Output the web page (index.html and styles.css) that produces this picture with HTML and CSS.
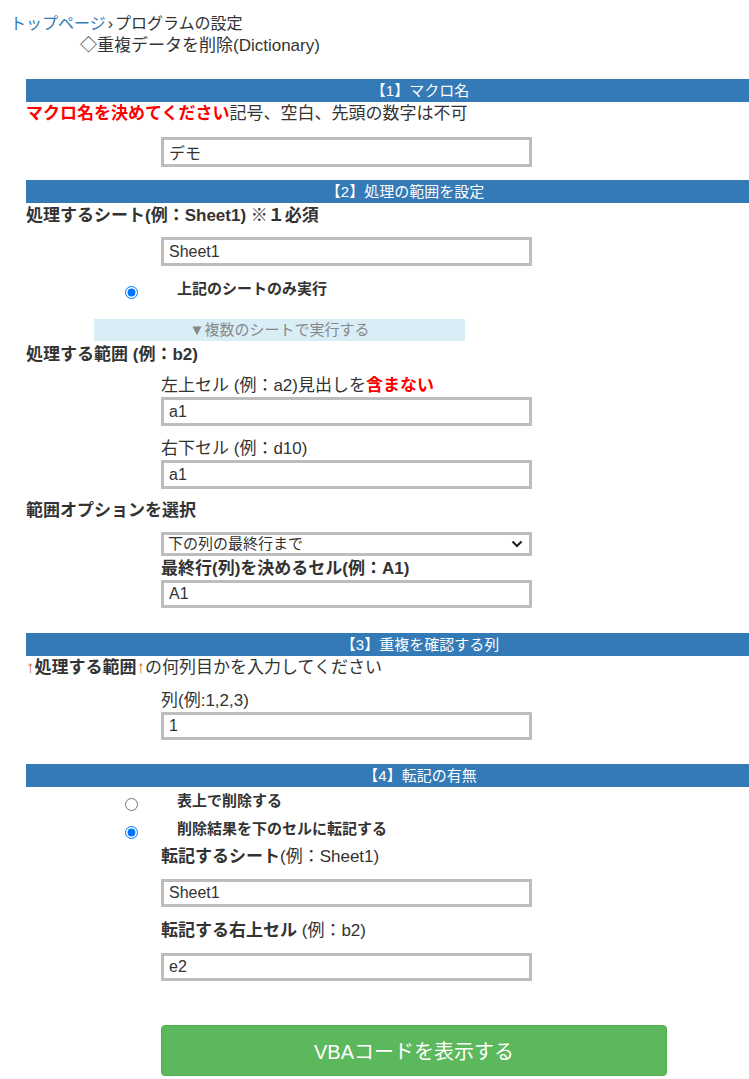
FILE: index.html
```html
<!DOCTYPE html>
<html lang="ja">
<head>
<meta charset="utf-8">
<title>重複データを削除(Dictionary)</title>
<link rel="stylesheet" href="styles.css">
</head>
<body>
<div class="crumb"><a class="crumb-link" href="#">トップページ</a><span class="crumb-sep">›</span>プログラムの設定</div>
<div class="title">◇重複データを削除(Dictionary)</div>

<div class="page">
  <div class="bar bar-1">【1】マクロ名</div>
  <div class="line line-red"><b class="red">マクロ名を決めてください</b>記号、空白、先頭の数字は不可</div>
  <input class="field field-1" type="text" value="デモ">

  <div class="bar bar-2">【2】処理の範囲を設定</div>
  <div class="line line-sheet"><b>処理するシート(例：Sheet1) ※１必須</b></div>
  <input class="field field-2" type="text" value="Sheet1">
  <label class="radio-row radio-row-1"><input class="radio" type="radio" name="sheet" checked><span class="radio-label">上記のシートのみ実行</span></label>
  <div class="toggle">▼複数のシートで実行する</div>

  <div class="line line-range"><b>処理する範囲 (例：b2)</b></div>
  <div class="line sub sub-topleft">左上セル (例：a2)見出しを<b class="red">含まない</b></div>
  <input class="field indent" type="text" value="a1">
  <div class="line sub sub-bottomright">右下セル (例：d10)</div>
  <input class="field indent" type="text" value="a1">

  <div class="line line-option"><b>範囲オプションを選択</b></div>
  <div class="select-wrap">
    <select class="select">
      <option>下の列の最終行まで</option>
    </select>
    <svg class="chevron" width="12" height="8" viewBox="0 0 12 8" aria-hidden="true"><path d="M1.5 1.5 L6 6 L10.5 1.5" fill="none" stroke="#222" stroke-width="2.2"/></svg>
  </div>
  <div class="line sub sub-last"><b>最終行(列)を決めるセル(例：A1)</b></div>
  <input class="field field-last indent" type="text" value="A1">

  <div class="bar bar-3">【3】重複を確認する列</div>
  <div class="line line-col"><span class="arrow">↑</span><b>処理する範囲</b><span class="arrow">↑</span>の何列目かを入力してください</div>
  <div class="line sub sub-col">列(例:1,2,3)</div>
  <input class="field field-col indent" type="text" value="1">

  <div class="bar bar-4">【4】転記の有無</div>
  <label class="radio-row radio-row-2"><input class="radio" type="radio" name="out"><span class="radio-label">表上で削除する</span></label>
  <label class="radio-row radio-row-3"><input class="radio" type="radio" name="out" checked><span class="radio-label">削除結果を下のセルに転記する</span></label>
  <div class="line sub sub-outsheet"><b>転記するシート</b>(例：Sheet1)</div>
  <input class="field field-out indent" type="text" value="Sheet1">
  <div class="line sub sub-outcell"><b>転記する右上セル</b> (例：b2)</div>
  <input class="field field-out indent" type="text" value="e2">

  <button class="submit" type="button">VBAコードを表示する</button>
</div>
</body>
</html>
```

FILE: styles.css
```css
html {
  overflow-x: hidden;
}
body {
  margin: 0;
  font-family: "Liberation Sans", "Noto Sans CJK JP", sans-serif;
  color: #333;
  background: #fff;
  font-size: 17px;
}
.crumb {
  margin-top: 13px;
  padding-left: 10px;
  font-size: 16px;
  line-height: 22px;
  color: #333;
}
.crumb-link {
  color: #337ab7;
  text-decoration: none;
}
.crumb-sep {
  margin: 0 2px;
}
.title {
  padding-left: 80px;
  font-size: 17px;
  line-height: 22px;
}
.page {
  padding-left: 26px;
  padding-bottom: 10px;
}
.bar {
  box-sizing: border-box;
  height: 23px;
  padding-left: 65px;
  line-height: 23px;
  background: #337ab7;
  color: #fff;
  font-size: 15px;
  text-align: center;
}
.bar-1 { margin-top: 22px; }
.bar-2 { margin-top: 13px; padding-left: 35px; }
.bar-3 { margin-top: 25px; }
.bar-4 { margin-top: 24px; }
.line {
  line-height: 22px;
  font-size: 17px;
  white-space: nowrap;
}
.red {
  color: #ff0000;
}
.line-red { margin-top: 1px; }
.line-sheet { margin-top: 2px; }
.line-range { margin-top: 3px; }
.line-option { margin-top: 11px; }
.line-col { margin-top: 1px; }
.arrow {
  color: #d2691e;
  font-size: 17px;
}
.sub {
  margin-left: 135px;
}
.sub-topleft { margin-top: 9px; }
.sub-bottomright { margin-top: 12px; }
.sub-last { margin-top: 2px; }
.sub-col { margin-top: 11px; }
.sub-outsheet { margin-top: 6px; }
.sub-outcell { margin-top: 13px; }
.field {
  display: block;
  box-sizing: border-box;
  width: 371px;
  height: 29px;
  margin: 0 0 0 135px;
  padding: 0 5px;
  border: 3px solid #bdbdbd;
  font-family: "Liberation Sans", "Noto Sans CJK JP", sans-serif;
  font-size: 16px;
  color: #333;
  background: #fff;
  outline: none;
}
.field-1 { margin-top: 12px; height: 30px; }
.field-2 { margin-top: 10px; }
.field-last { height: 28px; }
.field-col { height: 28px; }
.field-out { margin-top: 11px; height: 28px; }
.indent {
  margin-left: 135px;
}
.select-wrap {
  position: relative;
  width: 371px;
  height: 24px;
  margin: 10px 0 0 135px;
}
.select {
  display: block;
  box-sizing: border-box;
  width: 371px;
  height: 24px;
  margin: 0;
  padding: 0 4px;
  border: 3px solid #bdbdbd;
  border-radius: 0;
  -webkit-appearance: none;
  appearance: none;
  font-family: "Liberation Sans", "Noto Sans CJK JP", sans-serif;
  font-size: 15px;
  line-height: 18px;
  color: #333;
  background: #fff;
}
.chevron {
  position: absolute;
  right: 9px;
  top: 8px;
  pointer-events: none;
}
.radio-row {
  display: flex;
  align-items: flex-start;
  line-height: 22px;
  font-size: 15px;
  font-weight: bold;
  white-space: nowrap;
}
.radio {
  width: 13px;
  height: 13px;
  margin: 8px 39px 0 99px;
  flex: none;
}
.radio-row-1 { margin-top: 12px; }
.radio-row-2 { margin-top: 3px; }
.radio-row-3 { margin-top: 6px; }
.toggle {
  width: 371px;
  height: 22px;
  margin: 19px 0 0 68px;
  line-height: 22px;
  background: #d9edf7;
  color: #888;
  font-size: 15px;
  text-align: center;
}
.submit {
  display: block;
  box-sizing: border-box;
  width: 506px;
  height: 51px;
  margin: 44px 0 0 135px;
  border: 1px solid #4cae4c;
  border-radius: 4px;
  background: #5cb85c;
  color: #fff;
  font-family: "Liberation Sans", "Noto Sans CJK JP", sans-serif;
  font-size: 20px;
  cursor: pointer;
}
```
